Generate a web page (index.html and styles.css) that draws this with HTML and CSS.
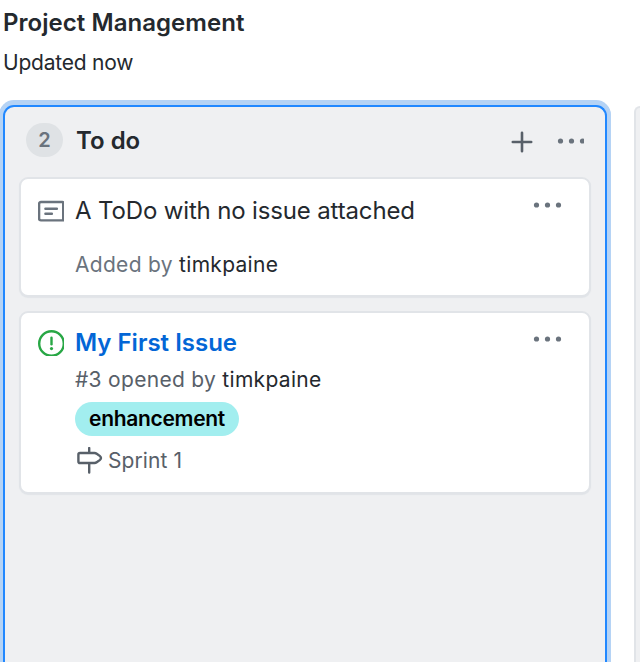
FILE: index.html
```html
<!DOCTYPE html>
<html lang="en">
<head>
<meta charset="utf-8">
<title>Project Management</title>
<link rel="stylesheet" href="styles.css">
</head>
<body>
<header class="header">
  <h1 class="title">Project Management</h1>
  <p class="updated">Updated now</p>
</header>
<main class="board">
  <section class="column column-active">
    <div class="column-head">
      <span class="counter">2</span>
      <h2 class="column-name">To do</h2>
      <svg class="plus" width="22" height="22" viewBox="0 0 22 22"><path d="M11 1.8v18.4M1.8 11h18.4"/></svg>
      <svg class="dots" width="27" height="8" viewBox="0 0 27 8"><circle cx="3.5" cy="4" r="2.6"/><circle cx="14.5" cy="4" r="2.6"/><circle cx="25.5" cy="4" r="2.6"/></svg>
    </div>
    <article class="card note">
      <svg class="icon" width="26" height="26" viewBox="0 0 26 26"><path class="line" d="M25.2 4v17.4H3q-1.9 0-1.9-1.9V4.9Q1.1 3 3 3h21.5q.7 0 .7.7M7.4 9.8h11.5M7.4 14.7h6.5"/></svg>
      <div class="card-body">
        <p class="note-text">A ToDo with no issue attached</p>
        <p class="added">Added by <a class="user">timkpaine</a></p>
      </div>
      <svg class="dots" width="30" height="8" viewBox="0 0 30 8"><circle cx="3.5" cy="4" r="2.6"/><circle cx="14.5" cy="4" r="2.6"/><circle cx="25.5" cy="4" r="2.6"/></svg>
    </article>
    <article class="card issue">
      <svg class="icon open" width="26" height="26" viewBox="0 0 26 26"><circle cx="13.5" cy="13.5" r="12.3"/><path d="M13.5 7.7v6.5"/><circle class="point" cx="13.5" cy="18.6" r="1.6"/></svg>
      <div class="card-body">
        <a class="issue-title">My First Issue</a>
        <p class="opened">#3 opened by <a class="user">timkpaine</a></p>
        <span class="label">enhancement</span>
        <p class="milestone"><svg width="28" height="28" viewBox="0 0 28 28"><path d="M14.2 1v5M14.2 16v9.5M5 6h14.5q1.2 0 2.2.7l3 2.2q2.6 2.1 0 4.2l-3 2.2q-1 .7-2.2.7H5q-1.6 0-1.6-1.6V7.6Q3.4 6 5 6z"/></svg><span>Sprint 1</span></p>
      </div>
      <svg class="dots" width="30" height="8" viewBox="0 0 30 8"><circle cx="3.5" cy="4" r="2.6"/><circle cx="14.5" cy="4" r="2.6"/><circle cx="25.5" cy="4" r="2.6"/></svg>
    </article>
  </section>
  <section class="column column-next"></section>
</main>
</body>
</html>
```
FILE: styles.css
```css
* { box-sizing: border-box; }
body {
  margin: 0;
  height: 662px;
  overflow: hidden;
  background: #fff;
  color: #24292e;
  font-family: Inter, sans-serif;
}
h1, h2, p { margin: 0; }
svg { display: block; flex: none; fill: none; }
.header { height: 105px; padding: 7px 3px 0; }
.title { font-size: 24px; line-height: 32px; font-weight: 600; letter-spacing: .05px; white-space: nowrap; }
.updated { margin-top: 10px; font-size: 21px; line-height: 28px; letter-spacing: -.22px; }
.board { display: flex; gap: 27px; height: 557px; padding-left: 3px; }
.column { background: #eff0f2; border: 2px solid #e1e4e8; }
.column-active {
  flex: none;
  width: 604px;
  padding: 0 14px;
  border: 2px solid #2188ff;
  border-bottom: 0;
  border-radius: 11px 11px 0 0;
  box-shadow: 0 0 0 4px #b5d3f5, 0 -1px 0 4px #b5d3f5;
}
.column-next { flex: 1; margin-top: 1px; border-width: 2px 0 0 2px; border-radius: 6px 0 0 0; }
.column-head { display: flex; align-items: center; height: 70px; padding: 0 6px 2px 7px; }
.counter {
  width: 37px;
  height: 34px;
  margin-top: -2px;
  border-radius: 17px;
  background: #dfe2e5;
  color: #6a737d;
  font-size: 20px;
  line-height: 34px;
  font-weight: 600;
  text-align: center;
}
.column-name { margin: 0 auto 0 13px; font-size: 24px; line-height: 32px; font-weight: 600; }
.plus { margin: 1px 25px 0 0; stroke: #586069; stroke-width: 2.6; stroke-linecap: round; }
.column-head .dots { margin-right: 1px; }
.column-head .plus { margin-right: 24px; }
.dots { fill: #6a737d; }
.card {
  display: flex;
  width: 572px;
  background: #fff;
  border: 2px solid #e1e4e8;
  border-radius: 9px;
  box-shadow: 0 1px 1px #e1e4e8;
  padding: 0 26px 0 17px;
}
.note { height: 120px; margin-bottom: 14px; padding-top: 15px; }
.issue { height: 183px; padding-top: 13px; }
.card-body { flex: 1; margin-left: 11px; white-space: nowrap; }
.icon { margin-top: 4px; }
.note .icon { margin-top: 5px; }
.line { stroke: #6a737d; stroke-width: 2.4; stroke-linecap: round; stroke-linejoin: round; }
.note-text { font-size: 24px; line-height: 34px; letter-spacing: -.15px; }
.card .dots { margin-top: 9px; }
.note .dots { margin-top: 7px; }
.added, .opened { color: #6a737d; font-size: 21px; line-height: 30px; letter-spacing: .3px; }
.added { margin-top: 22px; }
.opened { margin-top: 5px; color: #586069; }
.user { color: #24292e; }
.open { stroke: #28a745; stroke-width: 2.4; stroke-linecap: round; }
.open .point { fill: #28a745; stroke: none; }
.issue-title { display: block; color: #0366d6; font-size: 24px; line-height: 34px; font-weight: 600; }
.label {
  display: block;
  width: 164px;
  height: 34px;
  margin-top: 7px;
  border-radius: 17px;
  background: #a2eeef;
  color: #000;
  font-size: 21px;
  line-height: 34px;
  font-weight: 600;
  text-align: center;
  letter-spacing: -.3px;
}
.milestone { display: flex; align-items: center; gap: 5px; margin-top: 10px; color: #586069; font-size: 21px; line-height: 30px; letter-spacing: .1px; }
.milestone svg { stroke: #586069; stroke-width: 2.4; stroke-linecap: round; stroke-linejoin: round; }
```
